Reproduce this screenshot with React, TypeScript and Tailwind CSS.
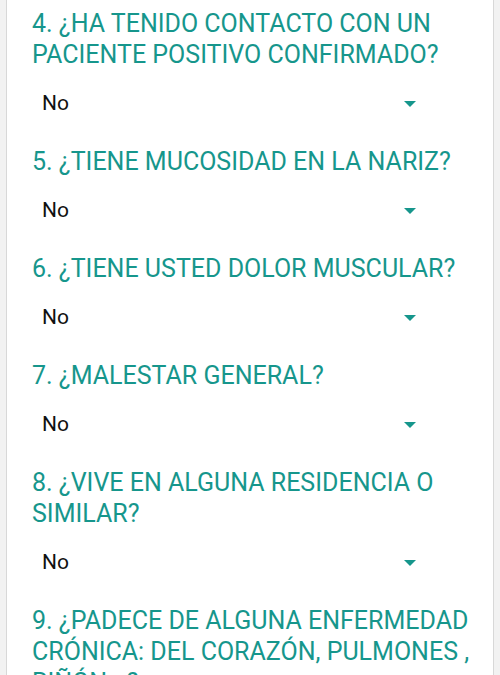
import React from "react";

type Question = {
  id: number;
  lines: string[];
  answer: string;
};

const questions: Question[] = [
  { id: 4, lines: ["4. ¿HA TENIDO CONTACTO CON UN", "PACIENTE POSITIVO CONFIRMADO?"], answer: "No" },
  { id: 5, lines: ["5. ¿TIENE MUCOSIDAD EN LA NARIZ?"], answer: "No" },
  { id: 6, lines: ["6. ¿TIENE USTED DOLOR MUSCULAR?"], answer: "No" },
  { id: 7, lines: ["7. ¿MALESTAR GENERAL?"], answer: "No" },
  { id: 8, lines: ["8. ¿VIVE EN ALGUNA RESIDENCIA O", "SIMILAR?"], answer: "No" },
];

const lastQuestion = ["9. ¿PADECE DE ALGUNA ENFERMEDAD", "CRÓNICA: DEL CORAZÓN, PULMONES ,", "RIÑÓN...?"];

const Heading = ({ lines }: { lines: string[] }) => (
  <h2 className="text-[25px] leading-[31px] font-normal text-[#16968c] whitespace-nowrap">
    {lines.map((line, i) => (
      <span key={i} className="block">
        {line}
      </span>
    ))}
  </h2>
);

const Dropdown = ({ value }: { value: string }) => (
  <div className="mt-[10px] flex h-12 items-center justify-between pl-[10px] pr-[77px]">
    <span className="text-[21px] text-[#111111]">{value}</span>
    {/* material style spinner arrow */}
    <svg width="12" height="6" viewBox="0 0 12 6" className="fill-[#16968c]">
      <path d="M0 0h12L6 6z" />
    </svg>
  </div>
);

export default function App() {
  return (
    <div className="flex h-[675px] w-[500px] overflow-hidden bg-[#f2f2f2] px-[6px]" style={{ fontFamily: "Roboto, 'Noto Sans', sans-serif" }}>
      <div className="flex-1 border-x border-[#d8d8d8] bg-white pl-[25px] pt-[8px]">
        {questions.map((q) => (
          <div key={q.id} className="mb-[18px]">
            <Heading lines={q.lines} />
            <Dropdown value={q.answer} />
          </div>
        ))}
        <Heading lines={lastQuestion} />
      </div>
    </div>
  );
}
